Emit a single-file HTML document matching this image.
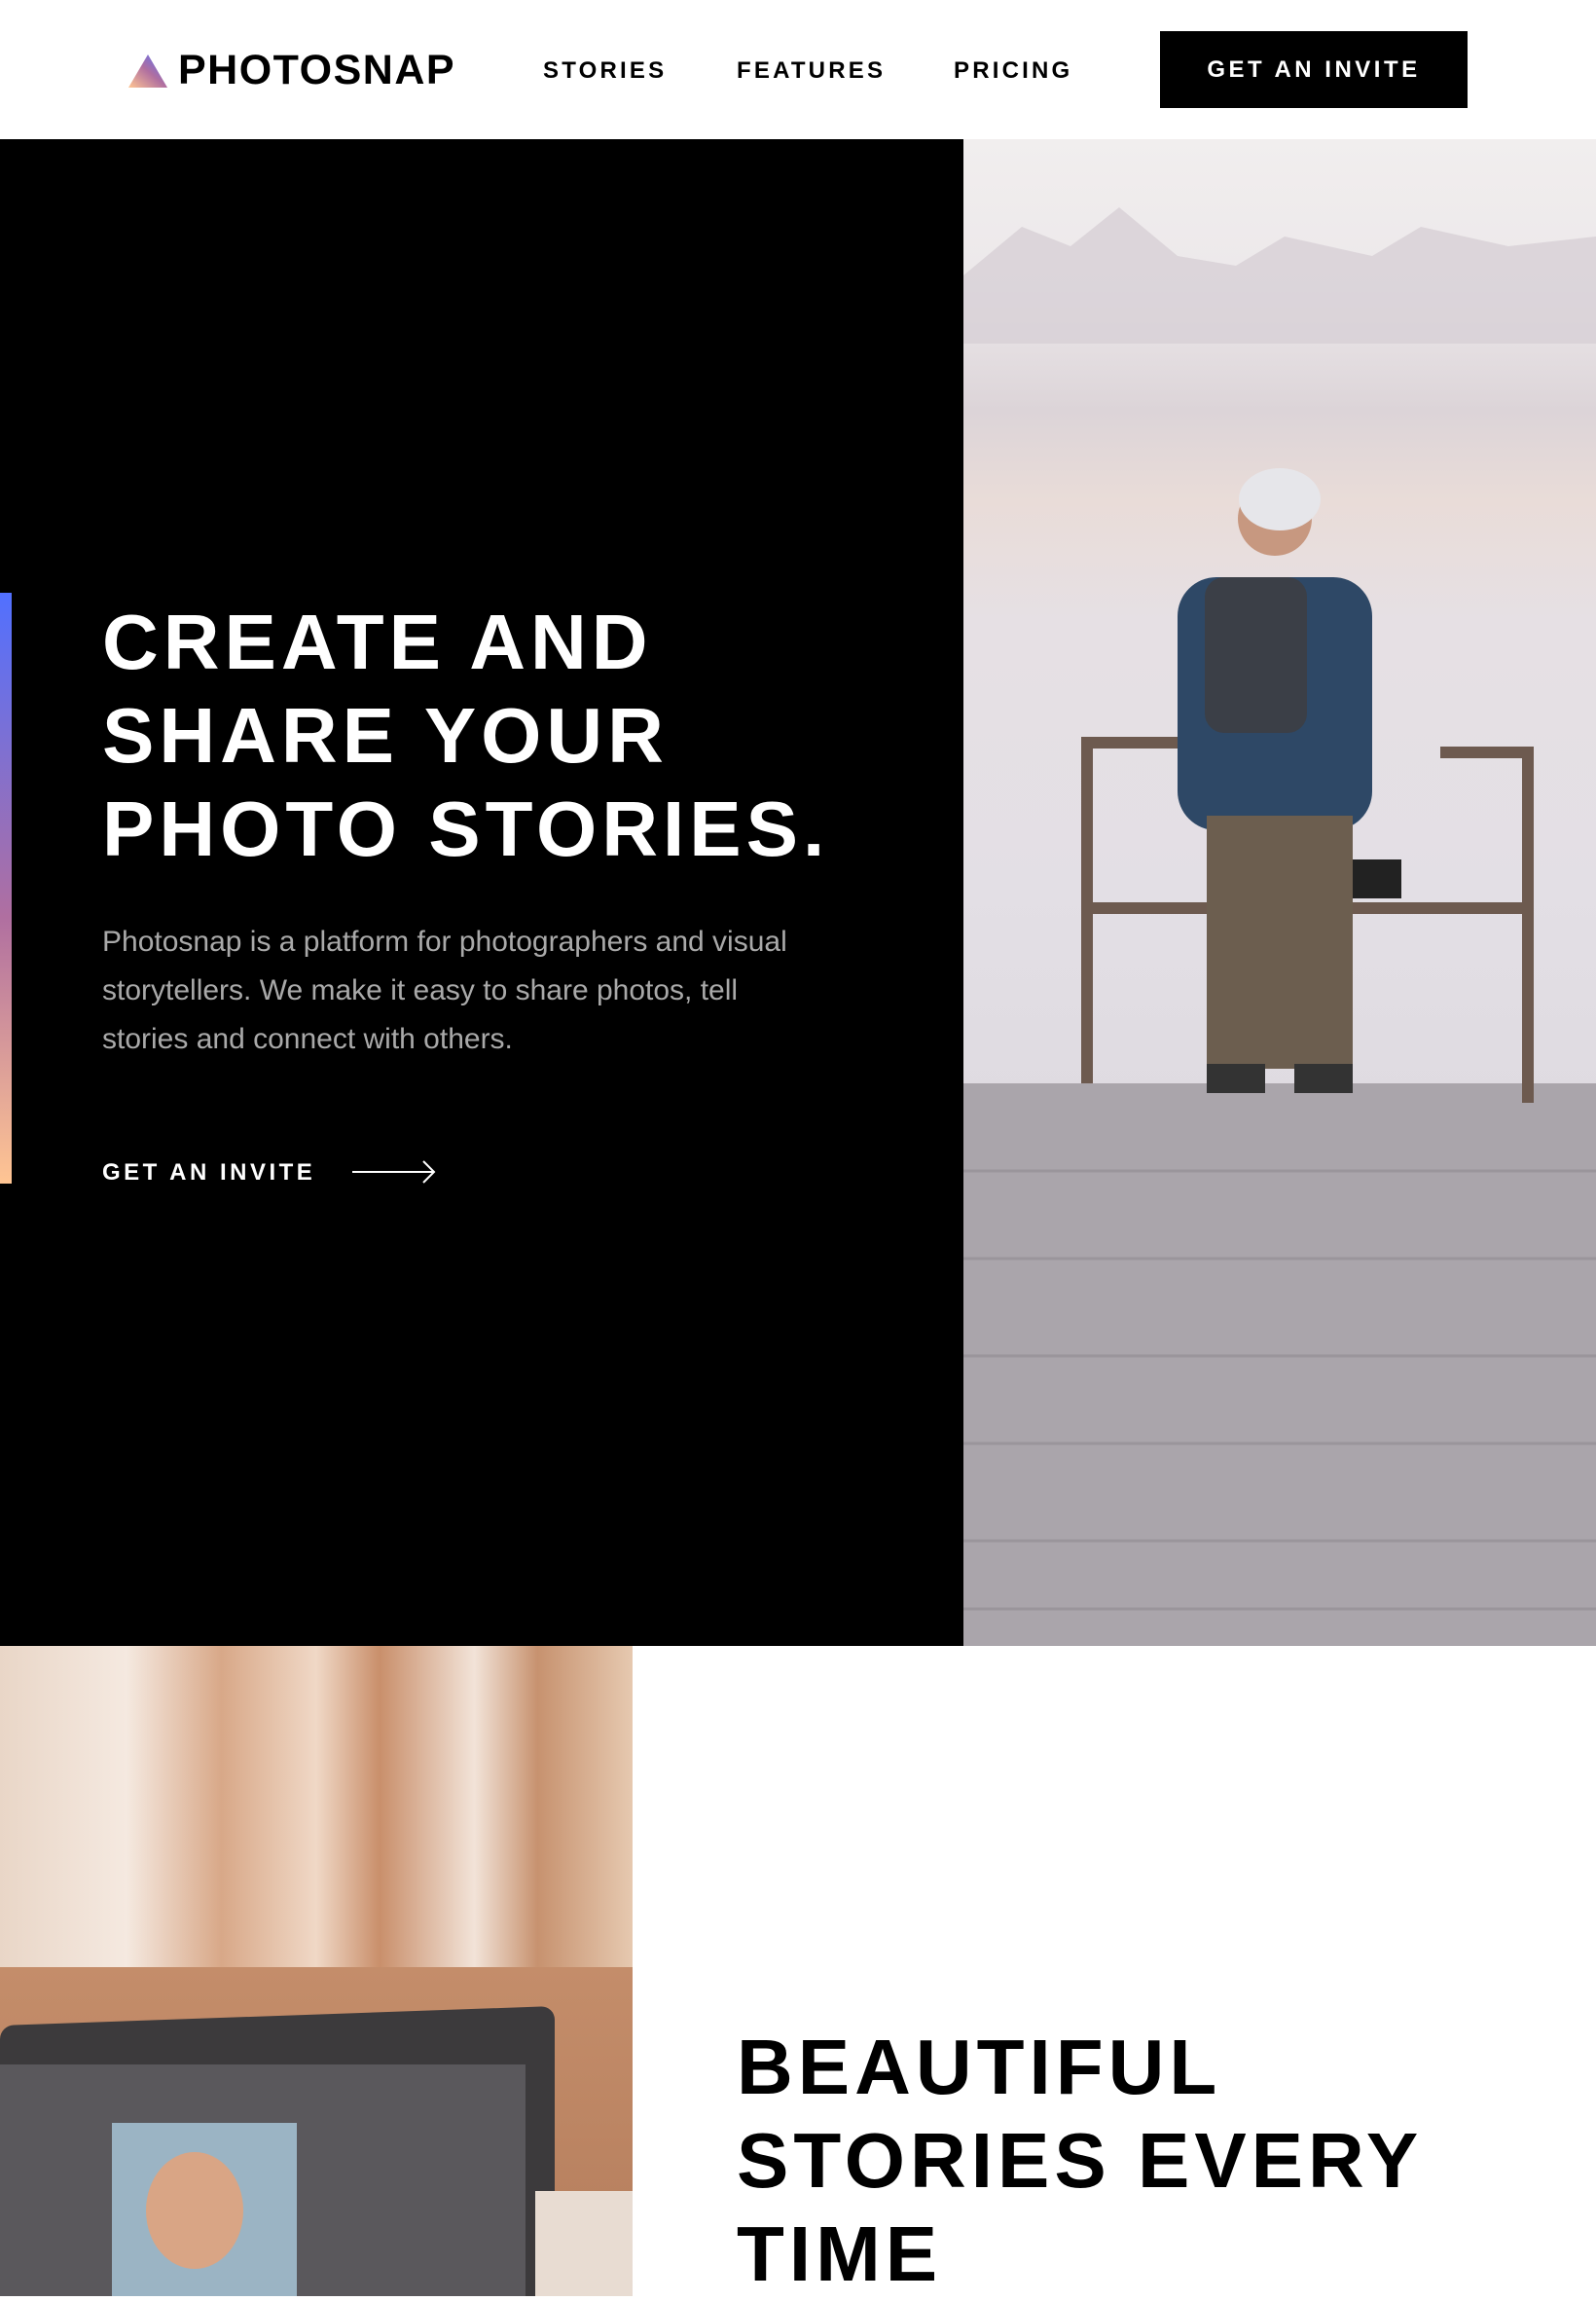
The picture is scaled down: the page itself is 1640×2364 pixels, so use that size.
<!DOCTYPE html>
<html><head><meta charset="utf-8"><style>
*{margin:0;padding:0;box-sizing:border-box}
body{width:1640px;height:2359px;overflow:hidden;background:#fff;font-family:"Liberation Sans",sans-serif;position:relative}
.abs{position:absolute}
.nav a{position:absolute;top:59px;font-size:24px;font-weight:bold;letter-spacing:3.2px;color:#000;line-height:28px}
h1,h2{position:absolute;font-size:80px;line-height:96px;letter-spacing:5px;font-weight:bold;text-transform:uppercase}
</style></head><body>
<svg class="abs" style="left:132px;top:56px" width="40" height="34" viewBox="0 0 40 34"><defs><linearGradient id="g" x1="1" y1="0" x2="0" y2="1"><stop offset="0" stop-color="#5170ff"/><stop offset=".5" stop-color="#b06fa0"/><stop offset="1" stop-color="#ffc593"/></linearGradient></defs><polygon points="20,0 40,34 0,34" fill="url(#g)"/></svg>
<div class="abs" style="left:183px;top:50px;font-size:43px;font-weight:bold;line-height:44px;letter-spacing:1.5px">PHOTOSNAP</div>
<div class="nav"><a style="left:558px">STORIES</a><a style="left:757px">FEATURES</a><a style="left:980px">PRICING</a></div>
<div class="abs" style="left:1192px;top:32px;width:316px;height:79px;background:#000;color:#fff;font-size:24px;font-weight:bold;letter-spacing:3.5px;text-align:center;line-height:79px">GET AN INVITE</div>
<div class="abs" style="left:0;top:143px;width:990px;height:1548px;background:#000"></div>
<div class="abs" style="left:0;top:609px;width:12px;height:607px;background:linear-gradient(#5170ff,#b06fa0 55%,#ffc593)"></div>
<h1 style="left:105px;top:612px;color:#fff">Create and<br>share your<br>photo stories.</h1>
<p class="abs" style="left:105px;top:943px;width:730px;font-size:30px;line-height:50px;color:#a9a9a9">Photosnap is a platform for photographers and visual storytellers. We make it easy to share photos, tell stories and connect with others.</p>
<div class="abs" style="left:105px;top:1191px;font-size:24px;font-weight:bold;letter-spacing:3.5px;color:#fff;line-height:28px">GET AN INVITE</div>
<svg class="abs" style="left:362px;top:1192px" width="86" height="24" viewBox="0 0 86 24"><path d="M0 12H84M73 1l11 11-11 11" stroke="#fff" stroke-width="2" fill="none"/></svg>
<div class="abs" style="left:990px;top:143px;width:650px;height:1548px;background:linear-gradient(#f1eeee 0,#ece8ea 10%,#dcd4d8 18%,#e9dcd8 24%,#e6e0e4 32%,#e3dfe5 50%,#ddd9df 70%,#d4d0d6 72%,#b4b0b6 85%,#a7a2a8 100%);overflow:hidden">
<svg width="650" height="1548" style="position:absolute;left:0;top:0">
<path d="M0 140 L60 90 L110 110 L160 70 L220 120 L280 130 L330 100 L420 120 L470 90 L560 110 L650 100 V210 H0Z" fill="#d7d0d6" opacity=".8"/>
<rect x="0" y="970" width="650" height="578" fill="#aaa5ab"/>
<g stroke="#9a959b" stroke-width="3">
<line x1="0" y1="1060" x2="650" y2="1060"/><line x1="0" y1="1150" x2="650" y2="1150"/><line x1="0" y1="1250" x2="650" y2="1250"/><line x1="0" y1="1340" x2="650" y2="1340"/><line x1="0" y1="1440" x2="650" y2="1440"/><line x1="0" y1="1510" x2="650" y2="1510"/></g>
<g stroke="#6d5a4f" stroke-width="12" fill="none"><path d="M127 970 V620 H220"/><path d="M580 990 V630 H490"/><path d="M127 790 H580"/></g>
<rect x="220" y="450" width="200" height="260" rx="40" fill="#2e4866"/>
<rect x="248" y="450" width="105" height="160" rx="20" fill="#3b3f47"/>
<rect x="250" y="695" width="150" height="260" fill="#6c5e4f"/>
<rect x="250" y="950" width="60" height="30" fill="#333"/><rect x="340" y="950" width="60" height="30" fill="#333"/>
<circle cx="320" cy="390" r="38" fill="#c79880"/>
<ellipse cx="325" cy="370" rx="42" ry="32" fill="#e6e6ea"/>
<rect x="400" y="740" width="50" height="40" fill="#222"/>
</svg></div>
<div class="abs" style="left:0;top:1691px;width:650px;height:668px;background:linear-gradient(90deg,#e9d6c7,#f5e9e0 20%,#d8a888 35%,#f0d8c6 50%,#c98f6b 60%,#f2e3d8 75%,#c7926f 85%,#e6c9b0);overflow:hidden">
<div class="abs" style="left:0;top:330px;width:650px;height:338px;background:linear-gradient(#c48d6a,#b47d5c)"></div>
<div class="abs" style="left:0;top:380px;width:570px;height:300px;background:#3c3a3c;transform:skewY(-2deg);border-radius:14px"></div>
<div class="abs" style="left:0;top:430px;width:540px;height:260px;background:#5a585c"></div>
<div class="abs" style="left:115px;top:490px;width:190px;height:190px;background:#9bb4c4"></div>
<div class="abs" style="left:150px;top:520px;width:100px;height:120px;border-radius:50%;background:#d9a585"></div>
<div class="abs" style="left:550px;top:560px;width:100px;height:110px;background:#e8dcd2"></div>
</div>
<h2 style="left:757px;top:2076px;color:#000">Beautiful<br>stories every<br>time</h2>
</body></html>
